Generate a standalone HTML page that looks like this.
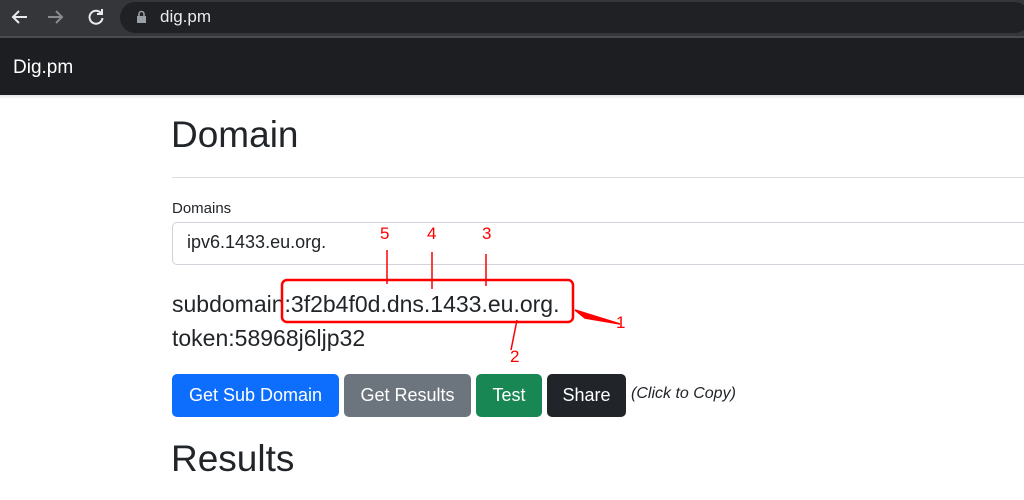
<!DOCTYPE html><html><head><style>
body{margin:0;width:1024px;height:500px;overflow:hidden;background:#fff;font-family:"Liberation Sans",sans-serif;color:#212529;position:relative}
.a{position:absolute}
.btn{position:absolute;top:374px;height:43px;border-radius:5px;color:#fff;font-size:18px;line-height:43px;text-align:center}
</style></head><body>
<div class="a" style="left:0;top:0;width:1024px;height:36px;background:#35363a"></div>
<div class="a" style="left:120px;top:2px;width:910px;height:31px;border-radius:16px;background:#202124"></div>
<svg class="a" style="left:10px;top:7px" width="100" height="20"><g stroke="#e8eaed" stroke-width="2" fill="none"><path d="M17 10H3M9 4L3 10l6 6"/></g><g stroke="#8a8b8e" stroke-width="2" fill="none"><path d="M38 10h14M46 4l6 6-6 6"/></g><g stroke="#e8eaed" stroke-width="2" fill="none"><path d="M91 6a6.5 6.5 0 1 0 1.5 5"/><path d="M92 2v5h-5"/></g></svg>
<svg class="a" style="left:136px;top:10px" width="12" height="14"><rect x="1" y="6" width="9" height="7" fill="#9aa0a6"/><path d="M3 6V4a2.5 2.5 0 0 1 5 0v2" stroke="#9aa0a6" stroke-width="1.6" fill="none"/></svg>
<div class="a" style="left:160px;top:7px;font-size:17px;color:#e8eaed">dig.pm</div>
<div class="a" style="left:0;top:36px;width:1024px;height:2px;background:#4a4b4f"></div>
<div class="a" style="left:0;top:38px;width:1024px;height:57px;background:#1c1e21"></div>
<div class="a" style="left:13px;top:57px;font-size:19px;color:#fff">Dig.pm</div>
<div class="a" style="left:0;top:95px;width:1024px;height:4px;background:linear-gradient(#e5e5e5,#fff)"></div>
<div class="a" style="left:171px;top:114px;font-size:37px;">Domain</div>
<div class="a" style="left:172px;top:177px;width:852px;height:1px;background:#dcdcdc"></div>
<div class="a" style="left:172px;top:200px;font-size:15px">Domains</div>
<div class="a" style="left:172px;top:222px;width:860px;height:41px;border:1px solid #ced4da;border-radius:5px"></div>
<div class="a" style="left:187px;top:232px;font-size:18px">ipv6.1433.eu.org.</div>
<div class="a" style="left:172px;top:291px;font-size:23px">subdomain:3f2b4f0d.dns.1433.eu.org.</div>
<div class="a" style="left:172px;top:325px;font-size:23px">token:58968j6ljp32</div>
<svg class="a" style="left:270px;top:222px" width="380" height="150"><g stroke="#f00" fill="none" stroke-width="2.5"><rect x="12" y="58" width="291" height="42" rx="5"/></g>
<g stroke="#f00" stroke-width="1.5" fill="#f00"><path d="M117 28v34M162 30v37M216 32v32M247 98l-6 30"/><path d="M350 102l-45-14 10 8z"/></g>
<g fill="#f00" font-family="Liberation Sans" font-size="17"><text x="110" y="17">5</text><text x="157" y="17">4</text><text x="212" y="17">3</text><text x="240" y="140">2</text><text x="346" y="106">1</text></g></svg>
<div class="btn" style="left:172px;width:167px;background:#0d6efd">Get Sub Domain</div>
<div class="btn" style="left:344px;width:127px;background:#6c757d">Get Results</div>
<div class="btn" style="left:476px;width:66px;background:#198754">Test</div>
<div class="btn" style="left:547px;width:79px;background:#212529">Share</div>
<div class="a" style="left:631px;top:385px;font-size:16px;font-style:italic">(Click to Copy)</div>
<div class="a" style="left:171px;top:438px;font-size:37px;">Results</div>
</body></html>
